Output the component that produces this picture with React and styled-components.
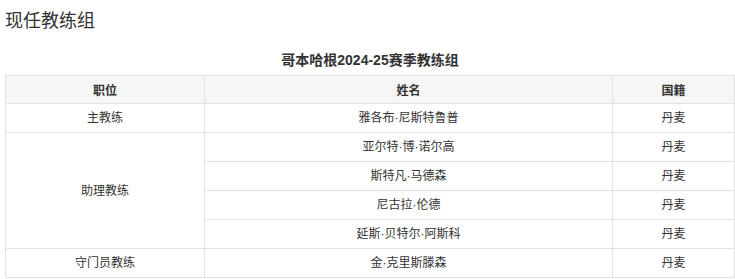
import React from "react";
import styled, { createGlobalStyle } from "styled-components";

const Global = createGlobalStyle`
  html, body { margin: 0; padding: 0; background: #fff; }
  body { font-family: "Liberation Sans", "Noto Sans CJK SC", sans-serif; color: #333; }
`;

const Page = styled.div`
  padding: 9px 0 0 5px;
`;

const Title = styled.h2`
  margin: 0;
  font-size: 18px;
  line-height: 24px;
  font-weight: normal;
  color: #333;
`;

const Table = styled.table`
  margin-top: 17px;
  width: 729px;
  border-collapse: collapse;
  table-layout: fixed;
  font-size: 12px;
  color: #333;
`;

const Caption = styled.caption`
  font-size: 14px;
  font-weight: bold;
  line-height: 20px;
  padding-bottom: 5px;
  color: #333;
`;

const Col = styled.col`
  width: ${(p) => p.$w}px;
`;

const Th = styled.th`
  background: #f6f6f6;
  border: 1px solid #e2e2e2;
  height: 28px;
  padding: 0;
  font-weight: bold;
  text-align: center;
  box-sizing: border-box;
`;

const Td = styled.td`
  border: 1px solid #e2e2e2;
  height: 28px;
  padding: 0;
  text-align: center;
  vertical-align: middle;
  line-height: 16px;
`;

const rows = [
  { role: "主教练", span: 1, names: ["雅各布·尼斯特鲁普"] },
  {
    role: "助理教练",
    span: 4,
    names: ["亚尔特·博·诺尔高", "斯特凡·马德森", "尼古拉·伦德", "延斯·贝特尔·阿斯科"],
  },
  { role: "守门员教练", span: 1, names: ["金·克里斯滕森"] },
];

export default function App() {
  return (
    <Page>
      <Global />
      <Title>现任教练组</Title>
      <Table>
        <Caption>哥本哈根2024-25赛季教练组</Caption>
        <colgroup>
          <Col $w={199} />
          <Col $w={408} />
          <Col $w={122} />
        </colgroup>
        <thead>
          <tr>
            <Th>职位</Th>
            <Th>姓名</Th>
            <Th>国籍</Th>
          </tr>
        </thead>
        <tbody>
          {rows.map((g) =>
            g.names.map((n, i) => (
              <tr key={n}>
                {i === 0 && <Td rowSpan={g.span}>{g.role}</Td>}
                <Td>{n}</Td>
                <Td>丹麦</Td>
              </tr>
            ))
          )}
        </tbody>
      </Table>
    </Page>
  );
}
